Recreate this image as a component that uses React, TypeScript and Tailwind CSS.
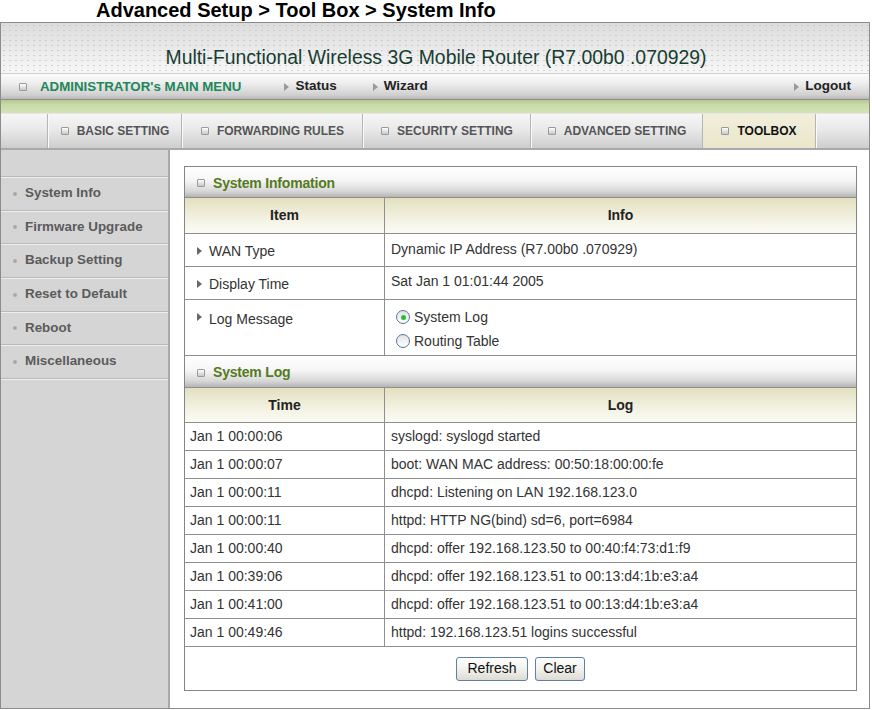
import React from "react";

const Sq = ({ c = "" }: { c?: string }) => (
  <span
    className={
      "inline-block w-[8px] h-[8px] border border-[#9a9a9a] rounded-[1px] bg-[linear-gradient(#ffffff,#c8c8c8)] shrink-0 " +
      c
    }
  />
);

const Tri = ({ color = "#777" }: { color?: string }) => (
  <svg width="5" height="8" viewBox="0 0 5 8" className="shrink-0">
    <path d="M0 0 L5 4 L0 8 Z" fill={color} />
  </svg>
);

const tabs = [
  { t: "BASIC SETTING", w: "w-[134px]" },
  { t: "FORWARDING RULES", w: "w-[181px]" },
  { t: "SECURITY SETTING", w: "w-[168px]" },
  { t: "ADVANCED SETTING", w: "w-[172px]" },
];

const side = [
  { t: "System Info", h: "h-[34px]" },
  { t: "Firmware Upgrade", h: "h-[33px]" },
  { t: "Backup Setting", h: "h-[34px]" },
  { t: "Reset to Default", h: "h-[34px]" },
  { t: "Reboot", h: "h-[33px]" },
  { t: "Miscellaneous", h: "h-[34px]" },
];

const logs: [string, string][] = [
  ["Jan 1 00:00:06", "syslogd: syslogd started"],
  ["Jan 1 00:00:07", "boot: WAN MAC address: 00:50:18:00:00:fe"],
  ["Jan 1 00:00:11", "dhcpd: Listening on LAN 192.168.123.0"],
  ["Jan 1 00:00:11", "httpd: HTTP NG(bind) sd=6, port=6984"],
  ["Jan 1 00:00:40", "dhcpd: offer 192.168.123.50 to 00:40:f4:73:d1:f9"],
  ["Jan 1 00:39:06", "dhcpd: offer 192.168.123.51 to 00:13:d4:1b:e3:a4"],
  ["Jan 1 00:41:00", "dhcpd: offer 192.168.123.51 to 00:13:d4:1b:e3:a4"],
  ["Jan 1 00:49:46", "httpd: 192.168.123.51 logins successful"],
];

const SectionHead = ({ t, h }: { t: string; h: string }) => (
  <div
    className={
      h +
      " flex items-center gap-[8px] pl-[12px] pt-[2px] border-b border-[#8f8f8f] bg-[linear-gradient(#ffffff_0%,#f6f6f6_45%,#d8d8d8_80%,#b4b4b4_100%)]"
    }
  >
    <Sq />
    <span className="text-[14px] font-bold text-[#557a1c] tracking-[-0.2px]">{t}</span>
  </div>
);

const ColHead = ({ a, b, h }: { a: string; b: string; h: string }) => (
  <div
    className={
      h +
      " grid grid-cols-[200px_1fr] border-b border-[#8f8f8f] bg-[linear-gradient(#e3e0bf,#f3f2e2_60%,#fbfbf5)]"
    }
  >
    <div className="flex items-center justify-center border-r border-[#8f8f8f] text-[14px] font-bold text-[#222]">
      {a}
    </div>
    <div className="flex items-center justify-center text-[14px] font-bold text-[#222]">{b}</div>
  </div>
);

const Radio = ({ on, label }: { on?: boolean; label: string }) => (
  <div className="flex items-center gap-[4px] h-[24px]">
    <span className="w-[14px] h-[14px] rounded-full border border-[#55739a] bg-[linear-gradient(#e2e2e2,#ffffff)] flex items-center justify-center">
      {on && <span className="w-[5px] h-[5px] rounded-full bg-[#2dbb3a]" />}
    </span>
    <span>{label}</span>
  </div>
);

export default function App() {
  return (
    <div className="w-[872px] h-[710px] bg-white overflow-hidden font-['Liberation_Sans',Arial,sans-serif] text-[#333]">
      <div className="h-[22px] pl-[96px] text-[20px] font-bold leading-[20px] text-black">
        Advanced Setup &gt; Tool Box &gt; System Info
      </div>
      <div className="w-[870px] h-[687px] border border-[#8c8c8c] flex flex-col">
        {/* header band */}
        <div className="h-[51px] relative border-b border-[#d0d0d0] bg-[linear-gradient(#dcdcdc,#f7f7f7)]">
          <div className="absolute inset-0 bg-[radial-gradient(#c2c2c2_0.8px,transparent_1.2px)] bg-[length:6px_5px] opacity-70" />
          <div className="relative h-full flex items-end justify-center pb-[6px] pl-[2px] text-[19.4px] text-[#173d31] leading-[20px]">
            Multi-Functional Wireless 3G Mobile Router (R7.00b0 .070929)
          </div>
        </div>
        {/* main menu */}
        <div className="h-[26px] flex items-center border-b border-[#8d8d8d] bg-[linear-gradient(#fbfbfb,#ececec_40%,#cfcfcf_85%,#b8b8b8)] text-[13.5px] font-bold">
          <Sq c="ml-[18px]" />
          <span className="ml-[13px] text-[#23865a] text-[13.3px]">ADMINISTRATOR's MAIN MENU</span>
          <span className="ml-[43px] flex items-center gap-[6px] text-[#222]">
            <Tri color="#999" />
            Status
          </span>
          <span className="ml-[36px] flex items-center gap-[6px] text-[#222]">
            <Tri color="#999" />
            Wizard
          </span>
          <span className="ml-auto mr-[18px] flex items-center gap-[6px] text-[#222]">
            <Tri color="#999" />
            Logout
          </span>
        </div>
        {/* green bar */}
        <div className="h-[13px] bg-[linear-gradient(#b5c98f,#cadcab_40%,#d2e2b6)]" />
        {/* tabs */}
        <div className="h-[37px] flex border-t border-[#e8e8e8] border-b-[2px] border-b-[#a9a9a9] bg-[linear-gradient(#f6f6f6,#e9e9e9_45%,#cdcdcd)]">
          <div className="w-[47px] border-r border-[#b5b5b5]" />
          {tabs.map((t) => (
            <div
              key={t.t}
              className={
                t.w +
                " flex items-center justify-center gap-[8px] border-l border-l-[#fafafa] border-r border-r-[#b5b5b5] text-[12px] font-bold text-[#555]"
              }
            >
              <Sq />
              <span>{t.t}</span>
            </div>
          ))}
          <div className="w-[113px] flex items-center justify-center gap-[8px] border-r border-[#b5b5b5] bg-[linear-gradient(#f1efdc,#e9e6cb)] text-[12px] font-bold text-[#111]">
            <Sq />
            <span>TOOLBOX</span>
          </div>
          <div className="flex-1 border-l border-[#fafafa]" />
        </div>
        {/* body */}
        <div className="flex-1 flex min-h-0">
          <div className="w-[169px] bg-[#d5d5d5] border-r-[2px] border-[#a9a9a9] flex flex-col">
            <div className="h-[26px]" />
            {side.map((s) => (
              <div
                key={s.t}
                className={
                  s.h +
                  " flex items-center gap-[8px] pl-[12px] border-t border-t-[#b9b9b9] shadow-[inset_0_1px_0_#efefef] text-[13.4px] font-bold text-[#5b5b5b]"
                }
              >
                <span className="w-[4px] h-[4px] rounded-full bg-[#a8a8a8]" />
                <span>{s.t}</span>
              </div>
            ))}
            <div className="border-t border-t-[#b9b9b9] shadow-[inset_0_1px_0_#efefef] h-[2px]" />
          </div>
          <div className="flex-1 pt-[16px] pl-[14px]">
            <div className="w-[673px] border border-[#858585] text-[14px] text-[#333] flex flex-col">
              <SectionHead t="System Infomation" h="h-[31px]" />
              <ColHead a="Item" b="Info" h="h-[36px]" />
              <div className="h-[33px] grid grid-cols-[200px_1fr] border-b border-[#8f8f8f]">
                <div className="flex items-center gap-[7px] pl-[12px] pt-[2px] border-r border-[#8f8f8f]">
                  <Tri color="#666" />
                  WAN Type
                </div>
                <div className="flex items-center pl-[6px] pb-[1px]">Dynamic IP Address (R7.00b0 .070929)</div>
              </div>
              <div className="h-[33px] grid grid-cols-[200px_1fr] border-b border-[#8f8f8f]">
                <div className="flex items-center gap-[7px] pl-[12px] pt-[2px] border-r border-[#8f8f8f]">
                  <Tri color="#666" />
                  Display Time
                </div>
                <div className="flex items-center pl-[6px] pb-[3px]">Sat Jan 1 01:01:44 2005</div>
              </div>
              <div className="h-[56px] grid grid-cols-[200px_1fr] border-b border-[#8f8f8f]">
                <div className="flex items-start gap-[7px] pl-[12px] pt-[9px] border-r border-[#8f8f8f]">
                  <span className="mt-[4px]">
                    <Tri color="#666" />
                  </span>
                  Log Message
                </div>
                <div className="flex flex-col pl-[11px] pt-[5px]">
                  <Radio on label="System Log" />
                  <Radio label="Routing Table" />
                </div>
              </div>
              <SectionHead t="System Log" h="h-[32px]" />
              <ColHead a="Time" b="Log" h="h-[35px]" />
              {logs.map(([a, b], i) => (
                <div key={i} className="h-[28px] grid grid-cols-[200px_1fr] border-b border-[#8f8f8f]">
                  <div className="flex items-center pl-[5px] border-r border-[#8f8f8f]">{a}</div>
                  <div className="flex items-center pl-[6px]">{b}</div>
                </div>
              ))}
              <div className="h-[43px] flex items-center justify-center gap-[7px]">
                <button className="w-[72px] h-[24px] rounded-[3px] border border-[#5f7fa3] bg-[linear-gradient(#ffffff,#f1f1ee_50%,#dedbd2)] text-[14px] text-[#111]">
                  Refresh
                </button>
                <button className="w-[50px] h-[24px] rounded-[3px] border border-[#5f7fa3] bg-[linear-gradient(#ffffff,#f1f1ee_50%,#dedbd2)] text-[14px] text-[#111]">
                  Clear
                </button>
              </div>
            </div>
          </div>
        </div>
      </div>
    </div>
  );
}
